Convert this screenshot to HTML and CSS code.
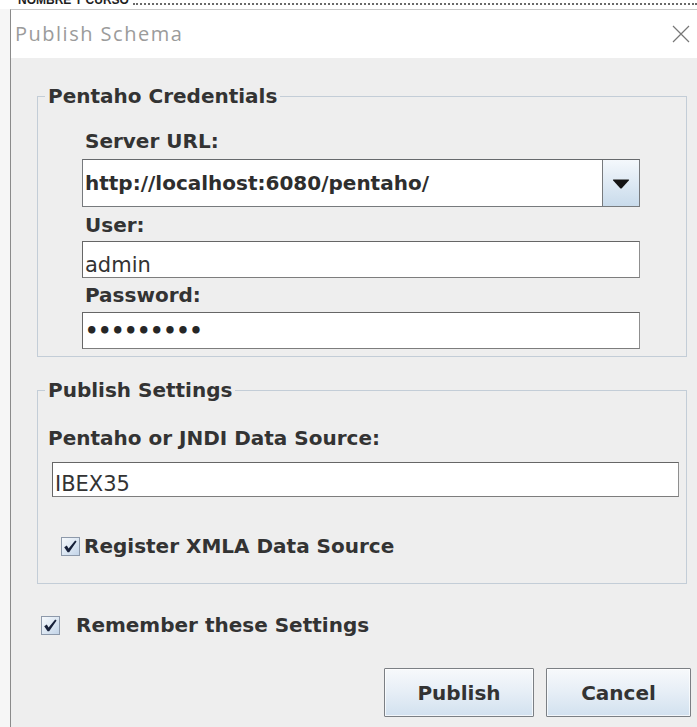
FILE: index.html
```html
<!DOCTYPE html>
<html lang="en">
<head>
<meta charset="utf-8">
<title>Publish Schema</title>
<link rel="stylesheet" href="styles.css">
</head>
<body>
  <div class="backdrop">
    <span class="backdrop-text">NOMBRE Y CURSO</span>
    <span class="backdrop-rule"></span>
  </div>

  <div class="dialog">
    <div class="titlebar">
      <span class="title">Publish Schema</span>
      <svg class="close" width="18" height="18" viewBox="0 0 18 18" aria-hidden="true">
        <path d="M1 1 L17 17 M17 1 L1 17" stroke="#777777" stroke-width="1.2" fill="none"/>
      </svg>
    </div>

    <div class="content">
      <fieldset class="group">
        <legend class="group-title">Pentaho Credentials</legend>
        <div class="group-body cred-body">
          <div class="label">Server URL:</div>
          <div class="combo">
            <span class="combo-value">http://localhost:6080/pentaho/</span>
            <span class="combo-btn">
              <svg width="18" height="10" viewBox="0 0 18 10" aria-hidden="true">
                <path d="M1.5 0.5 H16.5 Q17.6 0.6 16.8 1.6 L9.8 9.2 Q9 10 8.2 9.2 L1.2 1.6 Q0.4 0.6 1.5 0.5 Z" fill="#141414"/>
              </svg>
            </span>
          </div>
          <div class="label gap-7">User:</div>
          <div class="field gap-5">admin</div>
          <div class="label gap-6">Password:</div>
          <div class="field field-pass gap-6">•••••••••</div>
        </div>
      </fieldset>

      <fieldset class="group group-publish">
        <legend class="group-title">Publish Settings</legend>
        <div class="group-body pub-body">
          <div class="label">Pentaho or JNDI Data Source:</div>
          <div class="field field-source">IBEX35</div>
          <div class="check check-xmla">
            <span class="box">
              <svg width="19" height="19" viewBox="0 0 19 19" aria-hidden="true">
                <path d="M3.2 10.2 L5.8 8.6 L7.6 11.6 L14.2 3.4 L15.6 4.4 L8.2 15.2 L6.6 15.2 Z" fill="#17213a"/>
              </svg>
            </span>
            <span class="check-label">Register XMLA Data Source</span>
          </div>
        </div>
      </fieldset>

      <div class="check check-remember">
        <span class="box">
          <svg width="19" height="19" viewBox="0 0 19 19" aria-hidden="true">
            <path d="M3.2 10.2 L5.8 8.6 L7.6 11.6 L14.2 3.4 L15.6 4.4 L8.2 15.2 L6.6 15.2 Z" fill="#17213a"/>
          </svg>
        </span>
        <span class="check-label">Remember these Settings</span>
      </div>

      <div class="actions">
        <button class="btn btn-publish" type="button">Publish</button>
        <button class="btn btn-cancel" type="button">Cancel</button>
      </div>
    </div>
  </div>
</body>
</html>
```

FILE: styles.css
```css
html, body {
  margin: 0;
  padding: 0;
}

body {
  width: 697px;
  height: 727px;
  overflow: hidden;
  background: #f6f6f6;
  display: flex;
  flex-direction: column;
  font-family: "DejaVu Sans", "Liberation Sans", sans-serif;
  color: #333333;
}

/* window underneath the dialog, only its lowest line peeks out */
.backdrop {
  height: 9px;
  flex: none;
  overflow: hidden;
  display: flex;
  align-items: flex-start;
  background: #ffffff;
  padding-left: 18px;
}

.backdrop-text {
  font: bold 12px/14px "Liberation Sans", Arial, sans-serif;
  color: #1e1e1e;
  margin-top: -7px;
  white-space: nowrap;
}

.backdrop-rule {
  flex: 1;
  margin: 3px 0 0 4px;
  border-top: 2px dotted #6a6a6a;
}

/* dialog frame */
.dialog {
  flex: 1;
  margin-left: 10px;
  border-left: 1px solid #8a8a8a;
  border-top: 1px solid #c9c9c9;
  display: flex;
  flex-direction: column;
  min-height: 0;
}

.titlebar {
  height: 48px;
  flex: none;
  background: #ffffff;
  display: flex;
  align-items: center;
  justify-content: space-between;
  padding: 0 7px 0 4px;
}

.title {
  font-family: "Open Sans", "Noto Sans", sans-serif;
  font-size: 20px;
  letter-spacing: 1.5px;
  color: #9b9b9b;
  line-height: 24px;
}

.close {
  display: block;
}

.content {
  flex: 1;
  background: #eeeeee;
  padding: 28px 6px 0 26px;
}

/* titled group boxes */
.group {
  margin: 0 4px 0 0;
  padding: 0;
  min-width: 0;
  border: 1px solid #c3cdd7;
}

.group-title {
  margin-left: 7px;
  padding: 0 3px;
  font-weight: bold;
  font-size: 20px;
  line-height: 21px;
  color: #333333;
}

.group-publish {
  margin-top: 23px;
}

.cred-body {
  padding: 23px 46px 7px 44px;
}

.pub-body {
  padding: 26px 7px 26px 10px;
}

.label {
  font-weight: bold;
  font-size: 20px;
  line-height: 22px;
  color: #333333;
  margin-left: 3px;
  white-space: nowrap;
}

.pub-body .label {
  margin-left: 0;
}

.gap-5 { margin-top: 5px; }
.gap-6 { margin-top: 6px; }
.gap-7 { margin-top: 7px; }

/* editable combo with its arrow button */
.combo {
  margin-top: 7px;
  height: 48px;
  box-sizing: border-box;
  display: flex;
  border: 1px solid #777a7d;
  border-top-color: #66696c;
  background: #ffffff;
}

.combo-value {
  flex: 1;
  display: flex;
  align-items: center;
  padding-left: 2px;
  font-weight: bold;
  font-size: 20px;
  color: #2e2e2e;
  white-space: nowrap;
  overflow: hidden;
}

.combo-btn {
  width: 36px;
  flex: none;
  border-left: 1px solid #777a7d;
  background: linear-gradient(#f4f8fc, #dce8f3 55%, #c9dbeb);
  display: flex;
  align-items: center;
  justify-content: center;
}

.combo-btn svg {
  display: block;
  margin-top: 1px;
}

/* text fields */
.field {
  height: 37px;
  box-sizing: border-box;
  border: 1px solid #7d7d7d;
  border-color: #666666 #8f8f8f #7d7d7d #666666;
  background: #ffffff;
  display: flex;
  align-items: flex-end;
  padding-left: 2px;
  font-size: 21px;
  color: #333333;
  white-space: nowrap;
}

.field-pass {
  align-items: center;
  padding-top: 1px;
  font-weight: bold;
  font-size: 21px;
  letter-spacing: -0.4px;
  color: #262626;
}

.field-source {
  margin: 13px 0 0 4px;
  height: 35px;
}

/* check boxes */
.check {
  display: flex;
  align-items: center;
  height: 22px;
}

.box {
  width: 19px;
  height: 19px;
  box-sizing: border-box;
  flex: none;
  border: 1px solid #8d99aa;
  background: linear-gradient(135deg, #f6f9fc, #dbe6f2 55%, #c3d4e8);
}

.box svg {
  display: block;
  margin: -1px 0 0 -1px;
}

.check-label {
  font-weight: bold;
  font-size: 20px;
  line-height: 22px;
  color: #333333;
  white-space: nowrap;
}

.check-xmla {
  margin: 38px 0 0 13px;
  gap: 4px;
}

.check-remember {
  margin: 30px 0 0 4px;
  gap: 16px;
}

/* dialog buttons */
.actions {
  margin-top: 32px;
  display: flex;
  justify-content: flex-end;
  gap: 12px;
}

.btn {
  height: 49px;
  box-sizing: border-box;
  border: 1px solid #7b7f84;
  border-radius: 1px;
  background: linear-gradient(#f7f9fb, #e6eef6 50%, #d2e1ef);
  box-shadow: inset 0 0 0 1px rgba(255, 255, 255, 0.7);
  font-family: "DejaVu Sans", "Liberation Sans", sans-serif;
  font-weight: bold;
  font-size: 20px;
  color: #333333;
  padding: 0;
}

.btn-publish { width: 150px; }
.btn-cancel { width: 145px; }
```
